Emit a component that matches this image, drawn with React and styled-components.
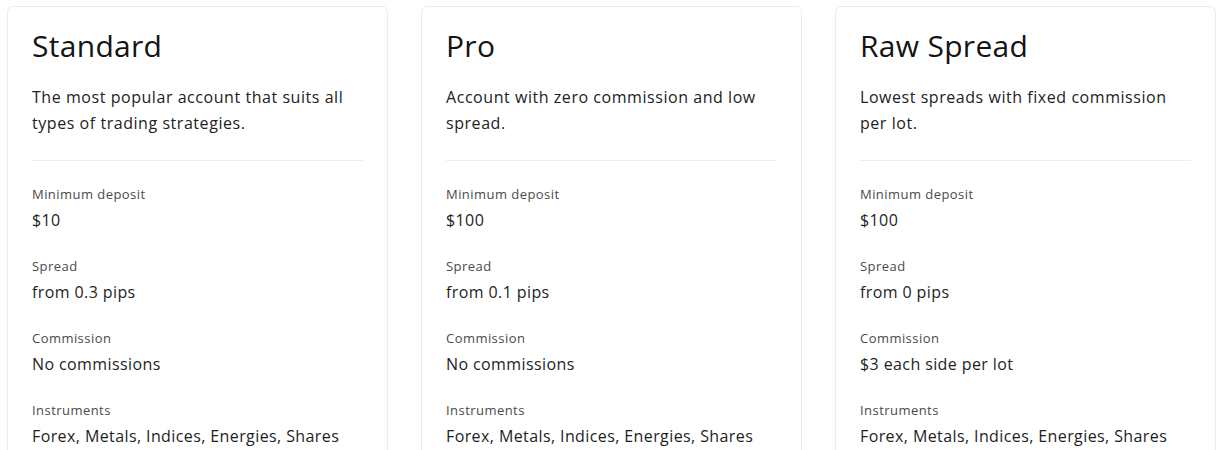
import React from "react";
import styled, { createGlobalStyle } from "styled-components";

const GlobalStyle = createGlobalStyle`
  html, body { margin: 0; padding: 0; background: #ffffff; overflow: hidden; }
  body { font-family: "Open Sans", "Liberation Sans", sans-serif; color: #1e1e1e; }
  * { box-sizing: border-box; }
`;

const Page = styled.div`
  display: flex;
  align-items: flex-start;
  gap: 33px;
  padding: 6px 6px 0 7px;
`;

const Card = styled.div`
  flex: 1 1 0;
  min-width: 0;
  border: 1px solid #ececec;
  border-radius: 6px;
  padding: 21px 24px 24px;
  background: #fff;
`;

const Title = styled.h2`
  margin: 0;
  font-size: 30px;
  line-height: 36px;
  font-weight: 400;
  letter-spacing: 0.3px;
  color: #141414;
`;

const Desc = styled.p`
  margin: 20px 0 0;
  font-size: 16px;
  line-height: 26px;
  letter-spacing: 0.55px;
  color: #222;
  min-height: 52px;
`;

const Divider = styled.hr`
  margin: 24px 0 0;
  border: 0;
  border-top: 1px solid #eeeeee;
`;

const Specs = styled.dl`
  margin: 23px 0 0;
  display: flex;
  flex-direction: column;
  gap: 24px;
`;

const Spec = styled.div`
  display: flex;
  flex-direction: column;
  gap: 4px;
`;

const Label = styled.dt`
  font-size: 13px;
  line-height: 20px;
  letter-spacing: 0.45px;
  color: #4a4a4a;
`;

const Value = styled.dd`
  margin: 0;
  font-size: 16px;
  line-height: 24px;
  letter-spacing: 0.4px;
  color: #1e1e1e;
`;

const accounts = [
  {
    name: "Standard",
    desc: "The most popular account that suits all types of trading strategies.",
    specs: [
      ["Minimum deposit", "$10"],
      ["Spread", "from 0.3 pips"],
      ["Commission", "No commissions"],
      ["Instruments", "Forex, Metals, Indices, Energies, Shares"],
    ],
  },
  {
    name: "Pro",
    desc: "Account with zero commission and low spread.",
    specs: [
      ["Minimum deposit", "$100"],
      ["Spread", "from 0.1 pips"],
      ["Commission", "No commissions"],
      ["Instruments", "Forex, Metals, Indices, Energies, Shares"],
    ],
  },
  {
    name: "Raw Spread",
    desc: "Lowest spreads with fixed commission per lot.",
    specs: [
      ["Minimum deposit", "$100"],
      ["Spread", "from 0 pips"],
      ["Commission", "$3 each side per lot"],
      ["Instruments", "Forex, Metals, Indices, Energies, Shares"],
    ],
  },
];

export default function App() {
  return (
    <>
      <GlobalStyle />
      <Page>
        {accounts.map((a) => (
          <Card key={a.name}>
            <Title>{a.name}</Title>
            <Desc>{a.desc}</Desc>
            <Divider />
            <Specs>
              {a.specs.map(([l, v]) => (
                <Spec key={l}>
                  <Label>{l}</Label>
                  <Value>{v}</Value>
                </Spec>
              ))}
            </Specs>
          </Card>
        ))}
      </Page>
    </>
  );
}
